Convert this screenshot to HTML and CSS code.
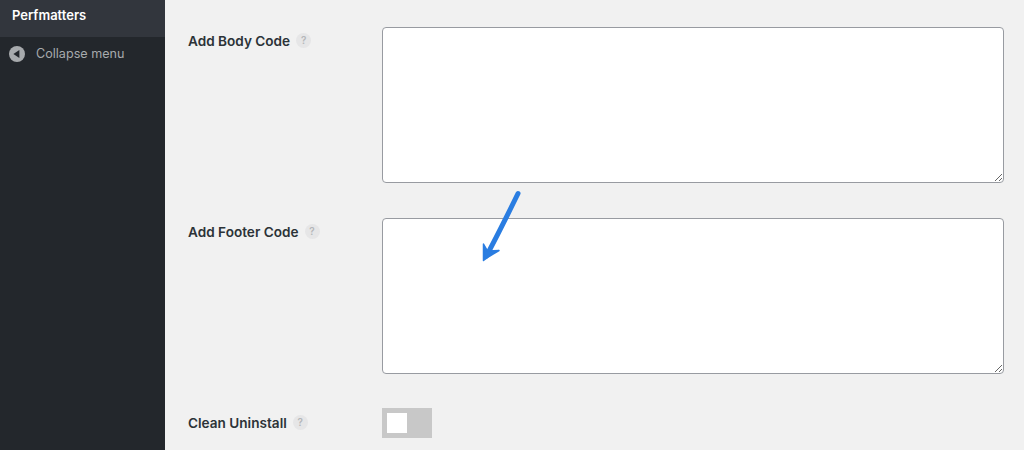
FILE: index.html
```html
<!DOCTYPE html>
<html lang="en">
<head>
<meta charset="utf-8">
<title>Perfmatters</title>
<link rel="stylesheet" href="styles.css">
</head>
<body>
<div class="page">
  <nav class="sidebar">
    <div class="current">Perfmatters</div>
    <div class="collapse">
      <svg class="collapse-icon" viewBox="0 0 16 16" width="16" height="16"><circle cx="8" cy="8" r="8" fill="#a7aaad"/><path d="M10.400 3.900v8.200L4.400 8z" fill="#23272c"/></svg>
      <span>Collapse menu</span>
    </div>
  </nav>
  <main class="content">
    <div class="row row-body">
      <div class="label"><span>Add Body Code</span><span class="help">?</span></div>
      <div class="area"><textarea></textarea></div>
    </div>
    <div class="row row-footer">
      <div class="label"><span>Add Footer Code</span><span class="help">?</span></div>
      <div class="area"><textarea></textarea></div>
    </div>
    <div class="row row-clean">
      <div class="label"><span>Clean Uninstall</span><span class="help">?</span></div>
      <div class="switch"><span class="knob"></span></div>
    </div>
    <svg class="arrow" viewBox="0 0 50 80" width="50" height="80"><path d="M43 5.500C35 22 25 42 11.500 68" fill="none" stroke="#2a7de1" stroke-width="5" stroke-linecap="round"/><path d="M8.500 72.500L8.500 56L12.500 63L24 62.500L14 68.500Z" fill="#2a7de1" stroke="#2a7de1" stroke-width="1.500" stroke-linejoin="round"/></svg>
  </main>
</div>
</body>
</html>
```
FILE: styles.css
```css
* { box-sizing: border-box; }
html, body { margin: 0; height: 100%; }
body { overflow: hidden; background: #f1f1f1; font-family: Inter, "Liberation Sans", sans-serif; }
.page { display: flex; width: 1024px; height: 450px; }
.sidebar { width: 165px; flex: none; background: #23272c; }
.current { height: 37px; padding: 7px 12px 0; background: #32363d; color: #fff; font-size: 13px; font-weight: 600; line-height: 16px; }
.collapse { display: flex; align-items: center; gap: 11px; padding: 9px 9px 0; color: #a7aaad; font-size: 12.600px; line-height: 16px; }
.collapse-icon { flex: none; }
.content { position: relative; flex: 1; padding: 27px 20px 0 23px; }
.row { display: flex; }
.row-body, .row-footer { height: 191px; }
.row-clean { height: 40px; }
.label { width: 194px; flex: none; display: flex; align-items: flex-start; gap: 6px; padding-top: 6px; color: #2c3338; font-size: 13.600px; font-weight: 600; line-height: 17px; }
.help { width: 15px; height: 15px; border-radius: 50%; background: #e6e6e7; color: #b4b6b9; font-size: 10px; line-height: 15px; text-align: center; }
.area { flex: 1; }
textarea { display: block; width: 100%; height: 155.500px; margin: 0; border: 1px solid #989ba1; border-radius: 4px; background: #fff; }
.switch { width: 50px; height: 30px; margin-top: -1px; padding: 5px; background: #c8c8c8; }
.knob { display: block; width: 20px; height: 20px; background: #fff; }
.arrow { position: absolute; left: 310px; top: 188px; }
```
